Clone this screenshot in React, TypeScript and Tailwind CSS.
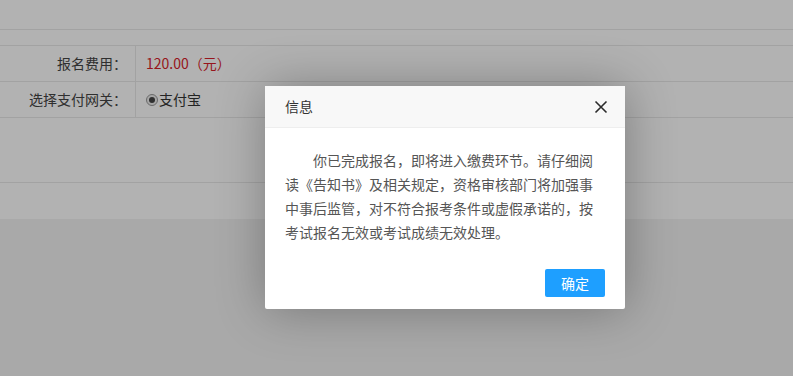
import React from "react";

const font = { fontFamily: '"Noto Sans CJK SC", "Noto Sans", sans-serif' };

const App = () => {
  return (
    <div className="relative w-[793px] h-[376px] overflow-hidden bg-[#f2f2f2] text-[14px]" style={font}>
      {/* page under the mask */}
      <div className="bg-white">
        <div className="h-[30px] border-b border-[#e8e8e8]" />
        <div className="h-[16px] border-b border-[#e8e8e8]" />
        <div className="flex h-[36px] border-b border-[#e8e8e8]">
          <div className="w-[136px] flex items-center justify-end pr-[8px] border-r border-[#e8e8e8] text-[#444]">
            报名费用：
          </div>
          <div className="flex items-center pl-[10px] text-[#d81e2a]">120.00（元）</div>
        </div>
        <div className="flex h-[36px] border-b border-[#e8e8e8]">
          <div className="w-[136px] flex items-center justify-end pr-[8px] border-r border-[#e8e8e8] text-[#444]">
            选择支付网关：
          </div>
          <div className="flex items-center pl-[10px] text-[#333]">
            <span className="w-[12px] h-[12px] rounded-full border border-[#999] bg-[#eee] flex items-center justify-center mr-[1px]">
              <span className="w-[6px] h-[6px] rounded-full bg-[#444]" />
            </span>
            支付宝
          </div>
        </div>
        <div className="h-[65px] border-b border-[#e8e8e8]" />
        <div className="h-[36px]" />
      </div>

      {/* mask */}
      <div className="absolute inset-0 bg-black/30" />

      {/* dialog */}
      <div className="absolute left-[265px] top-[86px] w-[360px] bg-white rounded-[2px] shadow-[1px_1px_50px_rgba(0,0,0,0.3)]">
        <div className="h-[42px] flex items-center justify-between pl-[20px] pr-[17px] bg-[#f8f8f8] border-b border-[#eee] text-[#333]">
          <span>信息</span>
          <svg width="14" height="14" viewBox="0 0 14 14">
            <path d="M1.5 1.5 L12.5 12.5 M12.5 1.5 L1.5 12.5" stroke="#2b2b2b" strokeWidth="1.6" />
          </svg>
        </div>
        <div className="p-[20px] leading-[24px] text-[#555] indent-[2em]">
          你已完成报名，即将进入缴费环节。请仔细阅读《告知书》及相关规定，资格审核部门将加强事中事后监管，对不符合报考条件或虚假承诺的，按考试报名无效或考试成绩无效处理。
        </div>
        <div className="flex justify-end px-[15px] pb-[12px]">
          <button className="mt-[5px] mx-[5px] h-[28px] w-[60px] rounded-[2px] bg-[#1e9fff] text-white text-[14px]">
            确定
          </button>
        </div>
      </div>
    </div>
  );
};

export default App;
